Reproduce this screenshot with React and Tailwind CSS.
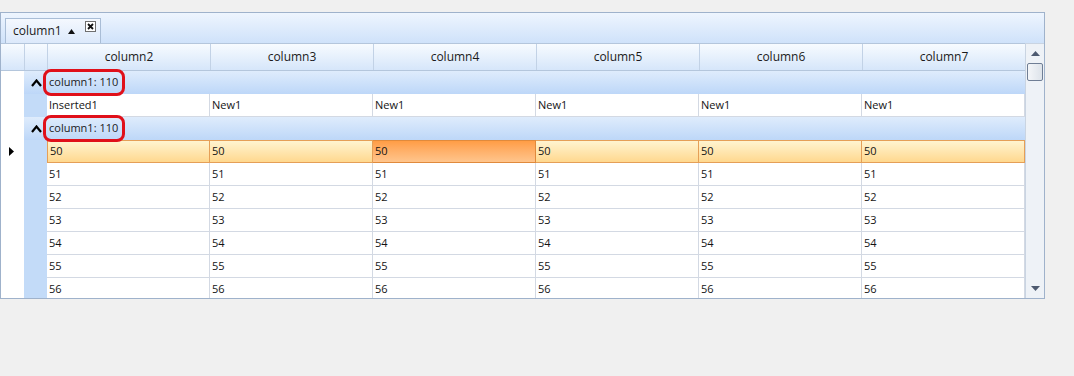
import React from 'react';

const columns = ['column2', 'column3', 'column4', 'column5', 'column6', 'column7'];
const numbers = [51, 52, 53, 54, 55, 56];

const font = { fontFamily: '"Open Sans", "Noto Sans", sans-serif' };

const GroupRow = () => (
  <div className="flex h-[23px] shrink-0">
    <div className="w-[23px] shrink-0 bg-white" />
    <div className="relative flex flex-1 items-center bg-gradient-to-b from-[#dfecfc] to-[#bdd7f8]">
      <svg width="11" height="8" viewBox="0 0 11 8" className="ml-[7px]">
        <path d="M1 7 L5.5 1.5 L10 7" fill="none" stroke="#000" strokeWidth="2.2" />
      </svg>
      <span className="ml-[7px] text-[11px] text-[#1b1b1b]">column1: 110</span>
      {/* red annotation */}
      <div className="absolute left-[19px] top-[-2px] h-[27px] w-[82px] rounded-[8px] border-[3px] border-[#e0101a]" />
    </div>
  </div>
);

const DataRow = ({ values, selected }) => (
  <div className="flex h-[23px] shrink-0">
    <div className="flex w-[23px] shrink-0 items-center justify-center bg-white">
      {selected && (
        <svg width="6" height="9" viewBox="0 0 6 9" className="ml-[-2px]">
          <path d="M0 0 L5 4.5 L0 9 Z" fill="#000" />
        </svg>
      )}
    </div>
    <div className="w-[23px] shrink-0 bg-[#c3dbf8]" />
    {values.map((v, i) => {
      const current = selected && i === 2;
      let cls = 'border-b border-r border-[#d3d9e3] bg-white';
      if (selected) cls = 'border-y border-r border-[#e59f57] bg-gradient-to-b from-[#fff4d0] to-[#ffd88e]';
      if (current) cls = 'border-y border-r border-[#e08a3c] bg-gradient-to-b from-[#ff9d45] to-[#ffc58c]';
      return (
        <div
          key={i}
          className={`flex h-full w-[163px] shrink-0 items-center pl-[2px] text-[11px] text-[#141414] ${cls} ${i === 0 && selected ? 'border-l' : ''}`}
        >
          {v}
        </div>
      );
    })}
  </div>
);

export default function App() {
  return (
    <div className="h-[376px] w-[1074px] bg-[#f0f0f0]" style={font}>
      <div className="pt-[12px]">
        <div className="w-[1045px] border border-[#9fb2cb] bg-white">
          {/* group panel */}
          <div className="flex h-[30px] items-end bg-gradient-to-b from-[#eef5fe] to-[#cfe2fa] pl-[4px]">
            <div className="flex h-[25px] items-center border border-b-0 border-[#a9bdd6] bg-gradient-to-b from-[#f4f8fe] to-[#dce9fb] pl-[7px] pr-[4px]">
              <span className="text-[12px] text-[#1b1b1b]">column1</span>
              <svg width="7" height="5" viewBox="0 0 7 5" className="ml-[6px] mt-[1px]">
                <path d="M0 5 L3.5 0 L7 5 Z" fill="#111" />
              </svg>
              <div className="mb-[10px] ml-[10px] flex h-[11px] w-[11px] items-center justify-center border border-[#6f6f6f] bg-white">
                <svg width="7" height="7" viewBox="0 0 7 7">
                  <path d="M1 1 L6 6 M6 1 L1 6" stroke="#111" strokeWidth="1.8" />
                </svg>
              </div>
            </div>
          </div>

          <div className="flex">
            <div className="flex h-[255px] w-[1024px] flex-col overflow-hidden">
              {/* header */}
              <div className="flex h-[28px] shrink-0 border-t border-b border-[#b4c6dc] bg-gradient-to-b from-[#f7fbff] to-[#d6e6fa]">
                <div className="w-[23px] shrink-0" />
                <div className="w-[23px] shrink-0 border-l border-[#c2d2e6]" />
                {columns.map((c) => (
                  <div
                    key={c}
                    className="flex w-[163px] shrink-0 items-center justify-center border-l border-[#c2d2e6] text-[12px] text-[#1b1b1b]"
                  >
                    {c}
                  </div>
                ))}
              </div>
              <GroupRow />
              <DataRow values={['Inserted1', 'New1', 'New1', 'New1', 'New1', 'New1']} />
              <GroupRow />
              <DataRow values={Array(6).fill('50')} selected />
              {numbers.map((n) => (
                <DataRow key={n} values={Array(6).fill(String(n))} />
              ))}
            </div>

            {/* scrollbar */}
            <div className="flex h-[255px] w-[19px] shrink-0 flex-col border-l border-t border-[#c9d4e2] bg-[#eef2f7]">
              <div className="flex h-[19px] items-center justify-center">
                <svg width="9" height="5" viewBox="0 0 9 5">
                  <path d="M0 5 L4.5 0 L9 5 Z" fill="#4d5a70" />
                </svg>
              </div>
              <div className="mx-[1px] h-[18px] rounded-[2px] border border-[#6f7e95] bg-gradient-to-r from-[#f4f6f9] to-[#dde3ea]" />
              <div className="flex-1" />
              <div className="flex h-[19px] items-center justify-center">
                <svg width="9" height="5" viewBox="0 0 9 5">
                  <path d="M0 0 L4.5 5 L9 0 Z" fill="#4d5a70" />
                </svg>
              </div>
            </div>
          </div>
        </div>
      </div>
    </div>
  );
}
